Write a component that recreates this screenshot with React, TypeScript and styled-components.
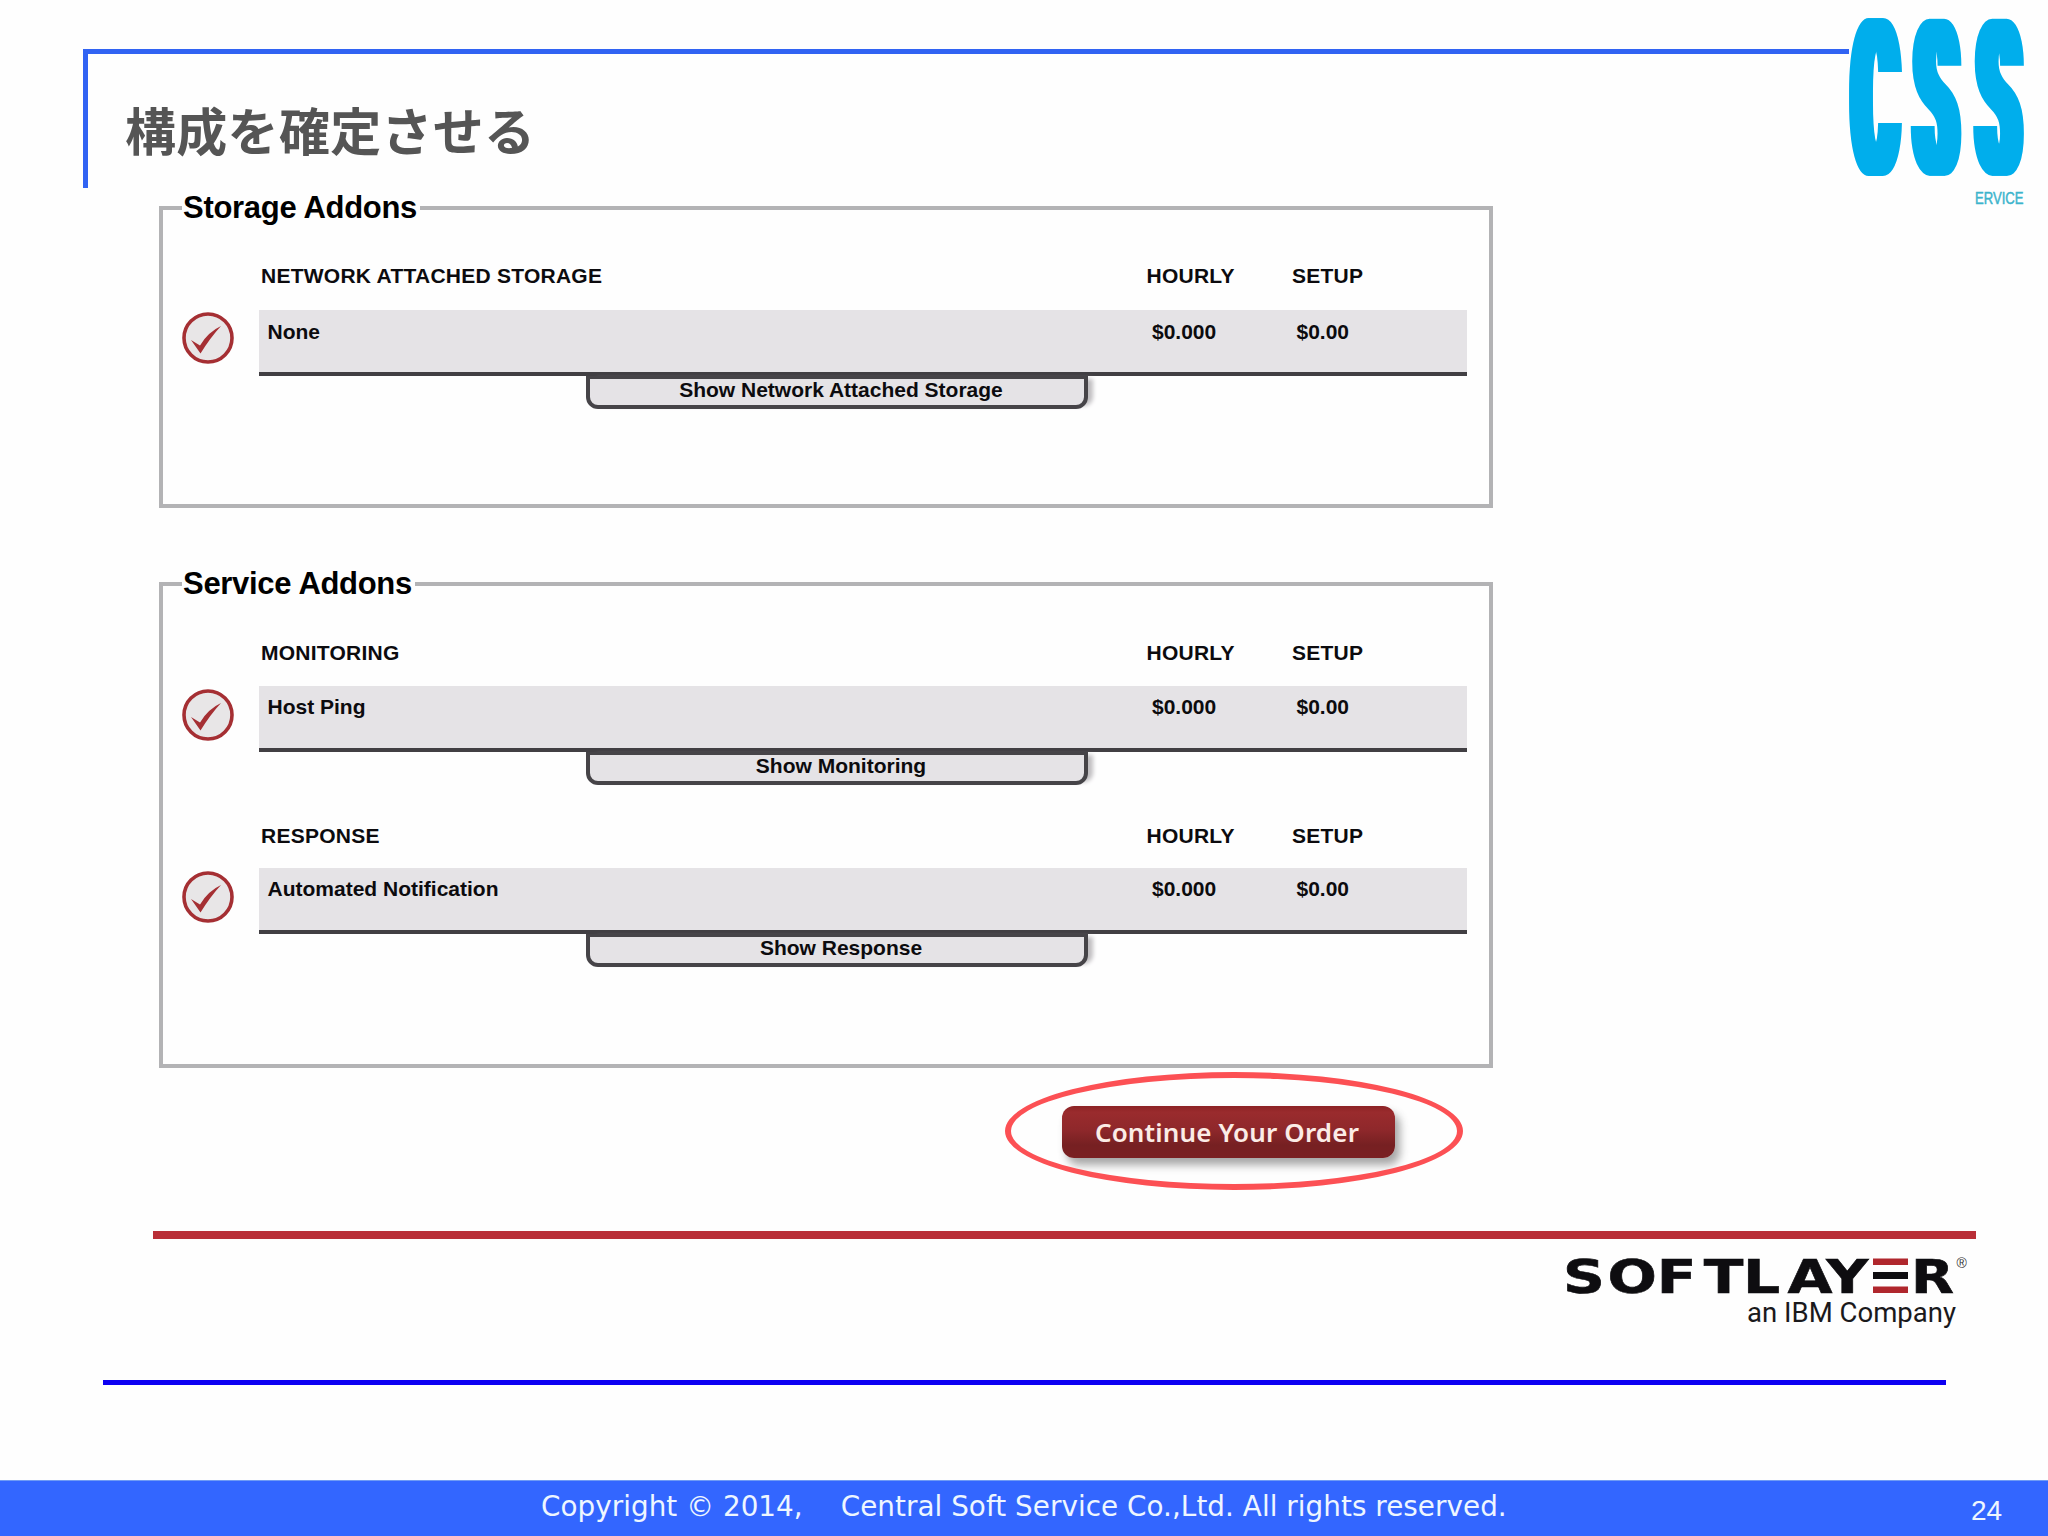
import React from "react";
import styled, { createGlobalStyle } from "styled-components";

const GlobalStyle = createGlobalStyle`
  *, *::before, *::after { box-sizing: border-box; }
  body { margin: 0; background: #fefefe; }
`;

const sans = `"Liberation Sans", Arial, sans-serif`;

const Slide = styled.main`
  position: relative;
  display: flex;
  flex-direction: column;
  width: 2048px;
  height: 1536px;
  overflow: hidden;
  background: #fefefe;
  font-family: ${sans};
  color: #0c0b0e;
`;

const Header = styled.header`
  flex: none;
  width: 1766px;
  height: 139px;
  margin: 49px 0 0 83px;
  padding: 49px 0 0 37px;
  border-top: 5px solid #3163f3;
  border-left: 5px solid #3163f3;
`;

const Title = styled.h1`
  margin: 0;
  font: 700 51px/52px "Noto Sans CJK JP", sans-serif;
  letter-spacing: 0.3px;
  color: #555;
`;

const CompanyLogo = styled.svg`
  position: absolute;
  left: 1849px;
  top: 0;
`;

const Group = styled.fieldset<{ $top: number; $height: number }>`
  flex: none;
  width: 1334px;
  height: ${(p) => p.$height}px;
  min-width: 0;
  margin: ${(p) => p.$top}px 0 0 159px;
  padding: 0 0 0 19px;
  border: 4px solid #b3b3b5;
`;

const Legend = styled.legend`
  padding: 0 3px 0 1px;
  font-size: 31px;
  font-weight: 700;
  line-height: 24px;
  letter-spacing: -0.3px;
  color: #000;
`;

const Options = styled.div<{ $top: number }>`
  display: flex;
  flex-direction: column;
  gap: 40px;
  padding-top: ${(p) => p.$top}px;
`;

const Option = styled.section<{ $gap: number }>`
  display: grid;
  grid-template-columns: 77px 1208px;
  row-gap: ${(p) => p.$gap}px;
  height: 143px;
`;

const Columns = styled.div<{ $inset: number; $hourly: number; $setup: number }>`
  display: grid;
  grid-template-columns: ${(p) => `${p.$hourly}px ${p.$setup}px 1fr`};
  padding-left: ${(p) => p.$inset}px;
  font-size: 21px;
  font-weight: 700;
  line-height: 24px;
  white-space: nowrap;
`;

const HeadRow = styled(Columns)`
  grid-column: 2;
  letter-spacing: 0.25px;
`;

const Selected = styled(Columns)<{ $pad: number }>`
  height: 66px;
  padding-top: ${(p) => p.$pad}px;
  background: #e5e3e6;
  border-bottom: 4px solid #413f43;
`;

const Mark = styled.svg<{ $drop: number }>`
  margin: ${(p) => p.$drop}px 0 0 -0.5px;
`;

const Body = styled.div`
  display: flex;
  flex-direction: column;
`;

const Toggle = styled.button`
  width: 502px;
  height: 33px;
  margin-left: 327px;
  padding: 0 0 7px 8px;
  border: 4px solid #464448;
  border-top-width: 3px;
  border-radius: 0 0 12px 12px;
  background: #e5e3e6;
  box-shadow: 8px 0 4px -3px #c0bec1;
  font: 700 21px/22px ${sans};
  color: #0c0b0e;
`;

const Actions = styled.div`
  position: relative;
  flex: none;
  margin: 38px 0 0 1062px;
  width: 333px;
  height: 52px;
`;

const Continue = styled.button`
  width: 333px;
  height: 52px;
  padding: 0 3px 1px 0;
  border: 0;
  border-radius: 12px;
  background: linear-gradient(#8c2325 0, #9a2b2d 12%, #8f282b 45%, #762022 75%, #7a2022 100%);
  box-shadow: 5px 7px 8px rgba(60, 60, 60, 0.45);
  font: 600 26px/50px "Noto Sans", sans-serif;
  letter-spacing: 0.15px;
  white-space: nowrap;
  color: #fbece6;
`;

const Highlight = styled.div`
  position: absolute;
  left: -57px;
  top: -34px;
  width: 458px;
  height: 118px;
  border: 6px solid #fc5054;
  border-radius: 50%;
  pointer-events: none;
`;

const Rule = styled.div<{ $left: number; $width: number; $top: number; $thick: number; $color: string }>`
  flex: none;
  width: ${(p) => p.$width}px;
  height: ${(p) => p.$thick}px;
  margin: ${(p) => p.$top}px 0 0 ${(p) => p.$left}px;
  background: ${(p) => p.$color};
`;

const Brand = styled.div`
  flex: none;
  height: 100px;
  margin: 10px 0 0 1560px;
`;

const Footer = styled.footer`
  flex: none;
  display: flex;
  align-items: flex-start;
  margin-top: auto;
  height: 56px;
  padding-left: 541px;
  background: #3366ff;
  border-top: 1px solid #6f9bf5;
  color: #eef6ff;
`;

const Copyright = styled.div`
  display: flex;
  gap: 38px;
  width: 1430px;
  padding-top: 9px;
  font: 400 27.8px/34px "DejaVu Sans", sans-serif;
  letter-spacing: 0.05px;
  white-space: nowrap;
`;

const PageNumber = styled.span`
  padding-top: 14px;
  font-size: 28px;
  line-height: 32px;
`;

const CheckMark = ({ drop }: { drop: number }) => (
  <Mark $drop={drop} width="52" height="52" viewBox="0 0 52 52">
    <circle cx="26" cy="26" r="24" fill="#e8e6e7" stroke="#a52f33" strokeWidth="3.6" />
    <path d="M9 28 L18 33.500 Q26 20 39 14 Q28 26 18.500 41.500 Z" fill="#a52f33" />
  </Mark>
);

type Item = { name: string; value: string; action: string; gap: number; pad: number; drop: number };

const groups: { title: string; top: number; height: number; pad: number; items: Item[] }[] = [
  {
    title: "Storage Addons",
    top: 8,
    height: 312,
    pad: 44,
    items: [
      { name: "NETWORK ATTACHED STORAGE", value: "None", action: "Show Network Attached Storage", gap: 22, pad: 10, drop: 2 },
    ],
  },
  {
    title: "Service Addons",
    top: 64,
    height: 496,
    pad: 45,
    items: [
      { name: "MONITORING", value: "Host Ping", action: "Show Monitoring", gap: 21, pad: 9, drop: 3 },
      { name: "RESPONSE", value: "Automated Notification", action: "Show Response", gap: 20, pad: 9, drop: 3 },
    ],
  },
];

export default function App() {
  return (
    <>
      <GlobalStyle />
      <Slide>
        <Header>
          <Title>構成を確定させる</Title>
        </Header>
        <CompanyLogo width="175" height="210" viewBox="0 0 175 210">
          <filter id="widen" filterUnits="userSpaceOnUse" x="0" y="0" width="175" height="190">
            <feMorphology operator="dilate" radius="7 0" />
          </filter>
          <g filter="url(#widen)">
            <text
              transform="translate(0 174) scale(0.67 2.150)"
              x="6.500 99.300 192.500"
              fontFamily="Roboto, sans-serif"
              fontWeight="700"
              fontSize="100"
              fill="#04aeec"
            >
              CSS
            </text>
          </g>
          <text
            x="126"
            y="203.500"
            fontFamily="Liberation Sans, sans-serif"
            fontSize="17"
            fill="#3cb4cc"
            stroke="#3cb4cc"
            strokeWidth="0.5"
            textLength="48.500"
            lengthAdjust="spacingAndGlyphs"
          >
            ERVICE
          </text>
        </CompanyLogo>

        {groups.map((g) => (
          <Group key={g.title} $top={g.top} $height={g.height}>
            <Legend>{g.title}</Legend>
            <Options $top={g.pad}>
              {g.items.map((it) => (
                <Option key={it.name} $gap={it.gap}>
                  <HeadRow $inset={2} $hourly={885.5} $setup={145.5}>
                    <span>{it.name}</span>
                    <span>HOURLY</span>
                    <span>SETUP</span>
                  </HeadRow>
                  <CheckMark drop={it.drop} />
                  <Body>
                    <Selected $inset={8.5} $hourly={884.5} $setup={144.5} $pad={it.pad}>
                      <span>{it.value}</span>
                      <span>$0.000</span>
                      <span>$0.00</span>
                    </Selected>
                    <Toggle>{it.action}</Toggle>
                  </Body>
                </Option>
              ))}
            </Options>
          </Group>
        ))}

        <Actions>
          <Continue>Continue Your Order</Continue>
          <Highlight />
        </Actions>

        <Rule $left={153} $width={1823} $top={73} $thick={8} $color="#b92e37" />
        <Brand>
          <svg width="420" height="90" viewBox="1560 1249 420 90">
            <g
              fill="#0e0d10"
              stroke="#0e0d10"
              strokeWidth="0.6"
              fontFamily="DejaVu Sans, sans-serif"
              fontWeight="700"
              fontSize="46.5"
            >
              <text transform="translate(0 1292.5) scale(1.25 1)" x="1250.500 1286 1325.500 1363 1394.500 1430 1461">
                SOFTLAY
              </text>
              <text transform="translate(1911 1292.5) scale(1.2 1)">R</text>
            </g>
            <rect x="1873" y="1258.500" width="35" height="6.500" fill="#b0272d" />
            <rect x="1873" y="1272" width="35" height="7" fill="#0e0d10" />
            <rect x="1873" y="1286.500" width="35" height="6.500" fill="#b0272d" />
            <text x="1956.500" y="1268" fontFamily="Liberation Sans, sans-serif" fontSize="14" fill="#333">®</text>
            <text x="1747" y="1321.500" fontFamily="Roboto, sans-serif" fontSize="27" fill="#1a191c" textLength="209" lengthAdjust="spacingAndGlyphs">
              an IBM Company
            </text>
          </svg>
        </Brand>
        <Rule $left={103} $width={1843} $top={31} $thick={5} $color="#0d00f2" />

        <Footer>
          <Copyright>
            <span>Copyright © 2014,</span>
            <span>Central Soft Service Co.,Ltd. All rights reserved.</span>
          </Copyright>
          <PageNumber>24</PageNumber>
        </Footer>
      </Slide>
    </>
  );
}
